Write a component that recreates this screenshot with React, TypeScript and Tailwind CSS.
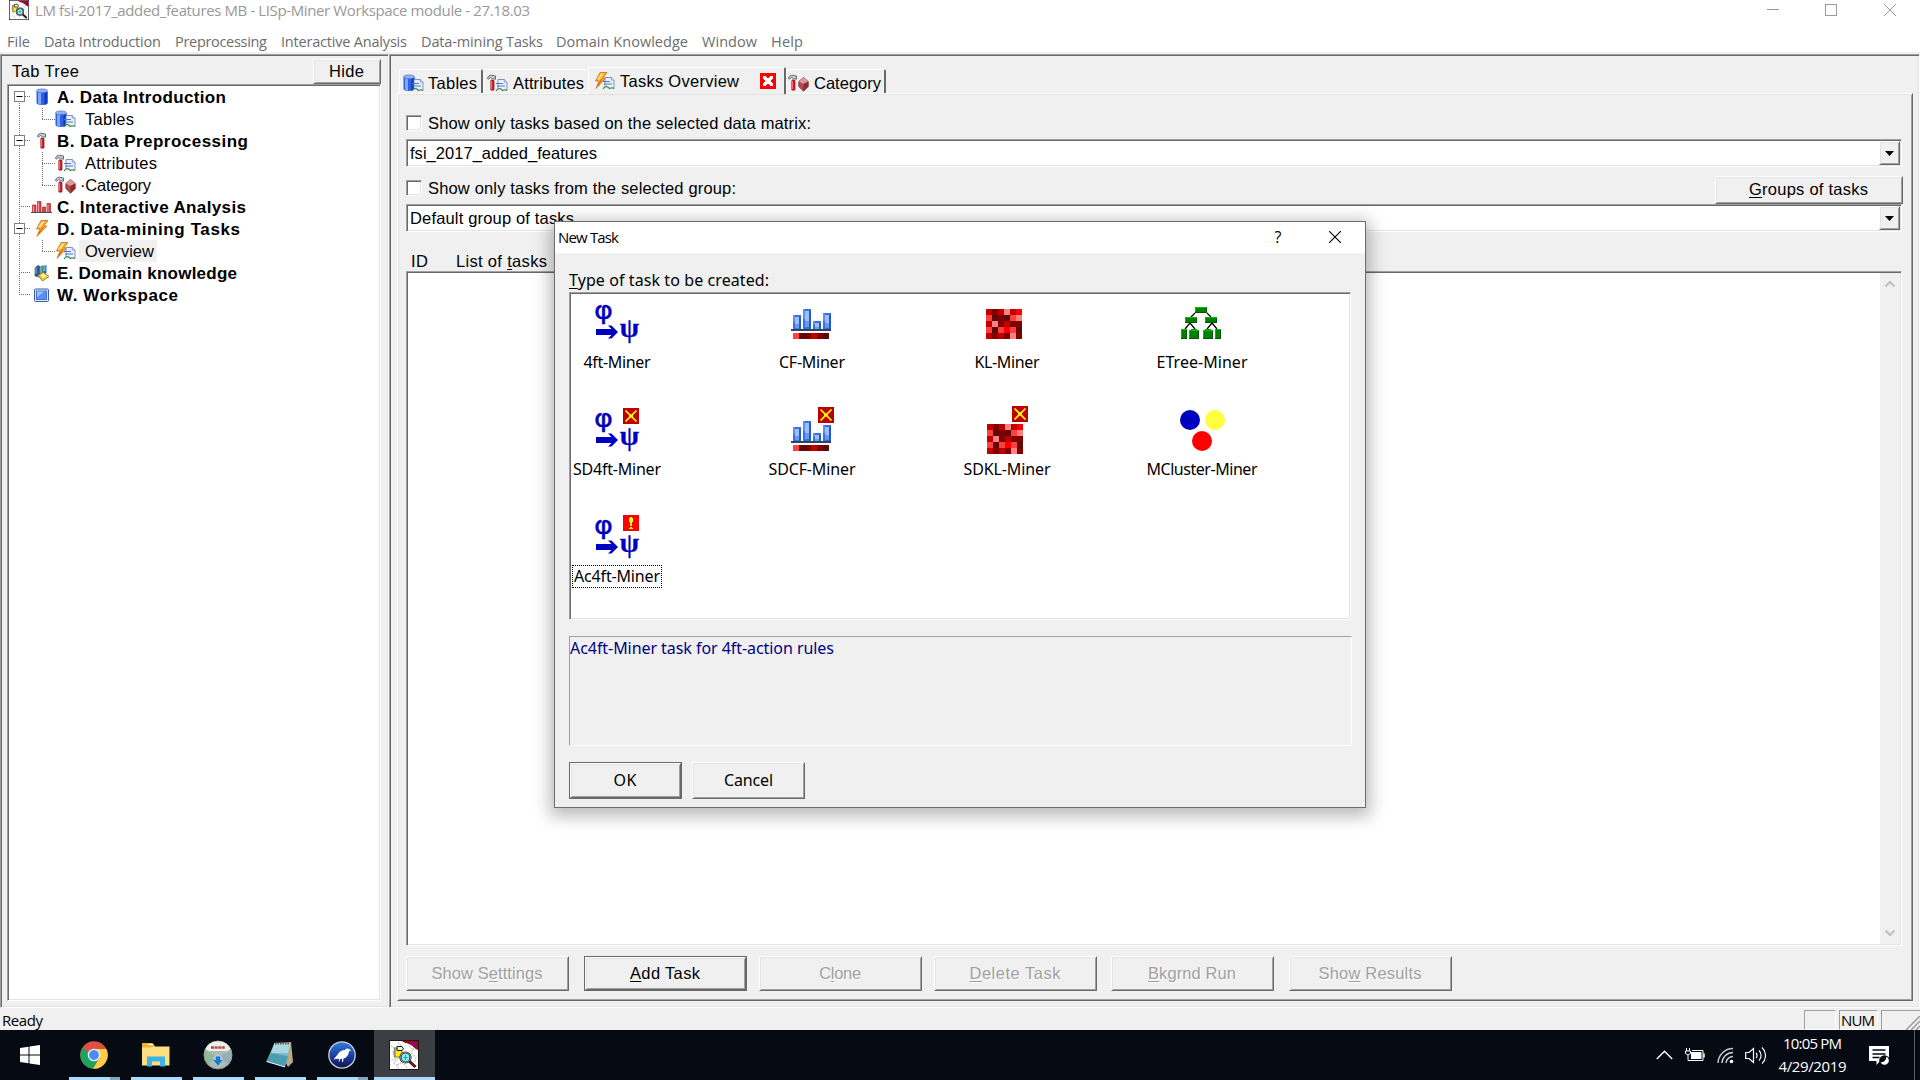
import { useLayoutEffect, useRef, type ReactNode } from "react";

const MS = "font-['Liberation_Sans',sans-serif]";
const UI = "font-['Open_Sans','Noto_Sans',sans-serif]";
const TAHOMA = "font-['Noto_Sans','DejaVu_Sans',sans-serif]";

const SUNKEN = "border border-t-[#a0a0a0] border-l-[#a0a0a0] border-r-white border-b-white shadow-[inset_1px_1px_0_#696969,inset_-1px_-1px_0_#e3e3e3]";
const RAISED = "border border-t-white border-l-white border-r-[#696969] border-b-[#696969] shadow-[inset_1px_1px_0_#e3e3e3,inset_-1px_-1px_0_#a0a0a0]";

/* Single line of text spread over a fixed width; "&" marks the mnemonic letter. */
function Text({ t, w, className = "" }: { t: string; w: number; className?: string }) {
  const ref = useRef<HTMLSpanElement>(null);
  useLayoutEffect(() => {
    const el = ref.current;
    if (!el) return;
    el.style.letterSpacing = "0px";
    const natural = el.getBoundingClientRect().width;
    const n = (el.textContent ?? "").length;
    el.style.letterSpacing = `${(w - natural) / Math.max(1, n - 1)}px`;
  }, [t, w]);
  const i = t.indexOf("&");
  return (
    <span className={`block shrink-0 whitespace-pre leading-5 ${className}`} style={{ width: w }}>
      <span ref={ref} className="inline-block whitespace-pre">
        {i < 0 ? t : (
          <>
            {t.slice(0, i)}
            <u className="underline decoration-1 underline-offset-2 [text-decoration-skip-ink:none]">{t[i + 1]}</u>
            {t.slice(i + 2)}
          </>
        )}
      </span>
    </span>
  );
}

/* ---------- small icons ---------- */

function Cylinder({ x = 0 }: { x?: number }) {
  return (
    <g transform={`translate(${x} 0)`}>
      <path d="M0.5 3v12c0 1 2.500 2 5.500 2s5.500-1 5.500-2V3z" fill="#2f5fe6" />
      <path d="M2 3.500h3v13c-2-.2-3-.6-3-1z" fill="#7fa8fb" />
      <path d="M8.500 4h3v11c0 .8-1.500 1.300-3 1.700z" fill="#1137c0" />
      <ellipse cx="6" cy="2.800" rx="5.500" ry="1.900" fill="#8fb2ff" stroke="#4e6fc9" strokeWidth=".7" />
    </g>
  );
}
function Hammer({ x = 0 }: { x?: number }) {
  return (
    <g transform={`translate(${x} 0)`}>
      <path d="M0.500 4.500C1 1.800 3 1 5 1.300L8.500 2v3.200L5.500 4.700 3.500 3.500 1.500 5z" fill="#c9cfd2" stroke="#555e62" strokeWidth=".9" />
      <path d="M4 4.500h2.600V7H4z" fill="#9aa" />
      <rect x="3.400" y="6" width="4" height="10.500" rx="1" fill="#b01822" />
      <rect x="4" y="7" width="1.200" height="8" fill="#ee7078" />
    </g>
  );
}
function Sheet() {
  return (
    <g>
      <path d="M11 5.500h6.500L20 8v8.500h-9z" fill="#e8f1fd" stroke="#6f86b5" strokeWidth=".9" />
      <path d="M9 9.500h7M10 12h8" stroke="#4a78c8" strokeWidth="1.100" />
      <path d="M9 17c2-3 4.500-3 6.500-.5 1.500-1 3-1 4.500 0" stroke="#3c8a45" strokeWidth="1.200" fill="#fff" />
      <path d="M17.300 5.500V8H20" fill="#fff" stroke="#6f86b5" strokeWidth=".8" />
    </g>
  );
}
function Bolt({ x = 0 }: { x?: number }) {
  return (
    <g transform={`translate(${x} 0)`}>
      <path d="M6 .5h7L8.800 6H12L2 16.500 5 9H1.500z" fill="#f9a91c" stroke="#c0762a" strokeWidth=".8" />
      <path d="M6.800 1.500h3L5.500 7.500H3z" fill="#ffe08a" />
      <path d="M8 7L3.500 14" stroke="#d2421a" strokeWidth=".8" />
    </g>
  );
}
function Gem() {
  return (
    <g>
      <path d="M15.500 3.500l4.700 4v5l-4.700 4.700-4.700-4.700v-5z" fill="#b04a50" stroke="#7d2c31" strokeWidth=".8" />
      <path d="M15.500 3.500l4.700 4-4.700 2.500-4.700-2.500z" fill="#dc9a9d" />
      <path d="M15.500 10l4.700-2.500v5l-4.700 4.700z" fill="#8d2b31" />
    </g>
  );
}

type Kind = "cyl" | "tables" | "hammer" | "attrs" | "category" | "chart" | "bolt" | "overview" | "books" | "screen";

function SmallIcon({ kind }: { kind: Kind }) {
  return (
    <svg width="21" height="18" viewBox="0 0 21 18" className="block shrink-0">
      {kind === "cyl" && <Cylinder x={5} />}
      {kind === "tables" && (<><Cylinder /><Sheet /></>)}
      {kind === "hammer" && <Hammer x={6} />}
      {kind === "attrs" && (<><Hammer /><Sheet /></>)}
      {kind === "category" && (<><Hammer /><Gem /></>)}
      {kind === "chart" && (
        <>
          <path d="M1.500 7h3.500v7H1.500zM6.500 3.500h3.500V14H6.500zM11.500 9h3v5h-3zM16 5.500h3.500V14H16z" fill="#d9434a" stroke="#b0262d" strokeWidth=".7" />
          <path d="M2.500 8v6M7.500 4.500V14M17 6.500V14" stroke="#f09a9d" />
          <path d="M0 14.500h21" stroke="#4c4f55" />
        </>
      )}
      {kind === "bolt" && <Bolt x={4} />}
      {kind === "overview" && (<><Bolt /><Sheet /></>)}
      {kind === "books" && (
        <>
          <path d="M4 4l3-2.500 2 1V13l-5-1z" fill="#2c5a9c" stroke="#1c355f" strokeWidth=".6" />
          <path d="M8.500 3l4-2v9l-4 3z" fill="#3d8f78" />
          <path d="M12.500 2l3-1v8l-3 3z" fill="#2e68b4" />
          <path d="M5 3.500v6M10 3v6M13.800 2v5" stroke="#bcd3ee" strokeWidth=".8" />
          <path d="M7 11.500l5-3.500 6 4.500-6.500 4.500z" fill="#e8c646" stroke="#8a6f16" strokeWidth=".8" />
          <path d="M9.500 11.500l3-2 3 2.500-3 2.200z" fill="#fbf0a8" />
        </>
      )}
      {kind === "screen" && (
        <>
          <rect x="3.500" y="3" width="14" height="12.500" rx="1" fill="#dfe8f7" stroke="#3d5fa8" />
          <rect x="5.500" y="5" width="10" height="8.500" fill="#5b8ff5" stroke="#2d5ed0" strokeWidth=".8" />
          <path d="M6 5.500h7l-7 6z" fill="#a4c4ff" />
        </>
      )}
    </svg>
  );
}

function AppIcon({ size }: { size: number }) {
  return (
    <svg width={size} height={size} viewBox="0 0 30 30" className="block shrink-0">
      <rect x=".5" y=".5" width="29" height="29" fill="#fff" stroke="#1a1a1a" />
      <path d="M2 6l5 3-3 5 5 4-4 5 5 5M9 2l3 4M15 24l4 5M25 8l-3 5 5 4-1 5M3 12h3M2 20l5-1M8 25l6-3M20 6l4 4" stroke="#c4c4c4" strokeWidth="1.200" fill="none" strokeDasharray="2 1" />
      <path d="M13 1h16v9c-3-1-5-4-8-5.500S15 3 13 1z" fill="#a5001c" />
      <path d="M22 2h2v1h3v2h2v2h-3V5h-3z" fill="#7a1080" />
      <rect x="6" y="8" width="7" height="9" fill="#ffee00" stroke="#6b6b00" strokeWidth=".8" />
      <path d="M5.500 7.500v10" stroke="#888" strokeWidth="1.500" />
      <path d="M8 6.500h5l1.500 2.500-1.500 1.500H8z" fill="#eee" stroke="#111" />
      <path d="M20 21l6.500 6" stroke="#111" strokeWidth="3" />
      <path d="M20.500 21.500l5.500 5" stroke="#b01414" strokeWidth="1.300" />
      <circle cx="16.500" cy="17.500" r="5" fill="#7df0f4" stroke="#222" strokeWidth="2.200" />
      <circle cx="16.500" cy="17.500" r="5" fill="none" stroke="#9a9a9a" />
      <path d="M14.500 17.500h4M16.500 15v5" stroke="#18a8c8" />
    </svg>
  );
}

/* ---------- tree ---------- */

type Row = { text: string; w: number; kind: Kind; level: 0 | 1; open?: boolean; last?: boolean; sel?: boolean; end?: boolean };
const rows: Row[] = [
  { text: "A. Data Introduction", w: 169, kind: "cyl", level: 0, open: true },
  { text: "Tables", w: 49, kind: "tables", level: 1, last: true },
  { text: "B. Data Preprocessing", w: 191, kind: "hammer", level: 0, open: true },
  { text: "Attributes", w: 72, kind: "attrs", level: 1 },
  { text: "·Category", w: 71, kind: "category", level: 1, last: true },
  { text: "C. Interactive Analysis", w: 189, kind: "chart", level: 0 },
  { text: "D. Data-mining Tasks", w: 183, kind: "bolt", level: 0, open: true },
  { text: "Overview", w: 69, kind: "overview", level: 1, last: true, sel: true },
  { text: "E. Domain knowledge", w: 180, kind: "books", level: 0 },
  { text: "W. Workspace", w: 121, kind: "screen", level: 0, end: true },
];

function Guide({ r, first }: { r: Row; first: boolean }) {
  const dots = { stroke: "#6e6e6e", strokeDasharray: "1 1", strokeWidth: 1 };
  const width = r.level === 0 ? 22 : 46;
  return (
    <svg width={width} height="22" viewBox={`0 0 ${width} 22`} className="block shrink-0">
      <path d={`M10.500 ${first ? 11 : 0}V${r.end ? 11 : 22}`} {...dots} />
      {r.level === 0 && <path d="M10 10.500h13" {...dots} />}
      {r.level === 1 && <path d={`M33.500 0V${r.last ? 11 : 22}M33 11.500h13`} {...dots} />}
      {r.open && (
        <>
          <rect x="5.500" y="5.500" width="10" height="10" fill="#fff" stroke="#808080" />
          <path d="M7.500 10.500h6" stroke="#000" />
        </>
      )}
    </svg>
  );
}

function Tree() {
  return (
    <div className={`${SUNKEN} flex-1 bg-white pl-px pt-px`}>
      {rows.map((r, i) => (
        <div key={r.text} className="flex h-[22px] items-center">
          <Guide r={r} first={i === 0} />
          <SmallIcon kind={r.kind} />
          {r.level === 0 ? (
            <Text t={r.text} w={r.w} className="ml-[5px] mt-[2px] text-[17px] font-bold" />
          ) : (
            <div className={`ml-[3px] flex h-[22px] items-center pr-[3px] ${r.text.startsWith("·") ? "pl-px" : "pl-[6px]"} ${r.sel ? "bg-[#f0f0f0]" : ""}`}>
              <Text t={r.text} w={r.w} className="text-[16.5px]" />
            </div>
          )}
        </div>
      ))}
    </div>
  );
}

/* ---------- main pane ---------- */

function Tab({ kind, text, w, className, gap = "ml-[5px]", active }: { kind: Kind; text: string; w: number; className: string; gap?: string; active?: boolean }) {
  return (
    <div
      className={`${className} ${active ? "z-10 -mb-px h-[27px]" : "h-6 pt-[3px]"} relative flex items-center overflow-hidden rounded-t-[2px] border-l border-r-2 border-t border-l-white border-t-white bg-[#f0f0f0]`}
    >
      <SmallIcon kind={kind} />
      <Text t={text} w={w} className={`${gap} text-[16.5px]`} />
      {active && (
        <svg width="16" height="16" viewBox="0 0 16 16" className="mb-px ml-[21px] block shrink-0">
          <rect width="16" height="16" fill="#f00" />
          <path d="M3 3h3v1h1v1h2V4h1V3h3v3h-1v1h-1v2h1v1h1v3h-3v-1H9v-1H7v1H6v1H3v-3h1V9h1V7H4V6H3z" fill="#fff" />
        </svg>
      )}
    </div>
  );
}

function Check({ text, w }: { text: string; w: number }) {
  return (
    <div className="flex items-center">
      <div className={`${SUNKEN} size-4 bg-white`} />
      <Text t={text} w={w} className="ml-[6px] text-[16.5px]" />
    </div>
  );
}

function Combo({ text, w }: { text: string; w: number }) {
  return (
    <div className={`${SUNKEN} flex h-[28px] w-[1496px] items-center bg-white pl-[3px] pr-px`}>
      <Text t={text} w={w} className="text-[16.5px]" />
      <div className={`${RAISED} ml-auto flex h-6 w-[21px] items-center justify-center bg-[#f0f0f0]`}>
        <svg width="9" height="5" viewBox="0 0 9 5"><path d="M0 0h9L4.500 5z" fill="#000" /></svg>
      </div>
    </div>
  );
}

function Button({ text, w, className, state = "normal", font = "mb-[2px] mr-px text-[16.5px]" }: { text: string; w: number; className: string; state?: "normal" | "default" | "disabled"; font?: string }) {
  const inner = <Text t={text} w={w} className={`${font} ${state === "disabled" ? "text-[#a0a0a0] [text-shadow:1px_1px_0_#fff]" : "text-black"}`} />;
  if (state === "default")
    return (
      <button className={`${className} flex border border-[#696969] bg-[#f0f0f0]`}>
        <span className={`${RAISED} flex h-full w-full items-center justify-center`}>{inner}</span>
      </button>
    );
  return <button className={`${className} ${RAISED} flex items-center justify-center bg-[#f0f0f0]`}>{inner}</button>;
}

function ListArea() {
  return (
    <div className={`${SUNKEN} flex h-[675px] w-[1496px] justify-end bg-white p-px`}>
      <div className="flex w-[20px] flex-col items-center justify-between bg-[#f0f0f0] py-[7px]">
        <svg width="10" height="8" viewBox="0 0 10 8"><path d="M.5 6.500L5 2l4.500 4.500" fill="none" stroke="#bfbfbf" strokeWidth="2" /></svg>
        <svg width="10" height="8" viewBox="0 0 10 8"><path d="M.5 1.500L5 6l4.500-4.500" fill="none" stroke="#bfbfbf" strokeWidth="2" /></svg>
      </div>
    </div>
  );
}

/* ---------- dialog ---------- */

function Arrow4ft({ badge }: { badge?: "x" | "!" }) {
  return (
    <svg width="46" height="44" viewBox="0 0 46 44" className="block overflow-visible">
      <g transform={badge ? "translate(0 4)" : undefined}>
        <text x="0" y="16" textLength="19" lengthAdjust="spacingAndGlyphs" fontFamily="DejaVu Sans" fontSize="25" fill="#0000c0" stroke="#0000c0" strokeWidth=".4">φ</text>
        <text x="35.500" y="34" textAnchor="middle" fontFamily="Liberation Serif" fontWeight="bold" fontSize="28" fill="#0000c0" stroke="#0000c0" strokeWidth=".3">ψ</text>
        <path d="M2 26h15.500l-3.500-3.500h3.500L24 29l-6.500 6.500H14l3.500-3.500H2z" fill="#0000c0" />
      </g>
      {badge === "x" && <g transform="translate(29 1)"><XBadge /></g>}
      {badge === "!" && (
        <g transform="translate(29 1)">
          <rect width="16" height="16" fill="#f00" />
          <path d="M7 2h2v1h1v4H9v4H7V7H6V3h1zM7 12h2v1h1v1H6v-1h1z" fill="#ff0" />
        </g>
      )}
    </svg>
  );
}
function XBadge() {
  return (
    <>
      <rect width="16" height="16" fill="#c00000" />
      <path d="M2.500 2.500l11 11M13.500 2.500l-11 11" stroke="#ff0" strokeWidth="1.700" />
      <rect x="6" y="6.500" width="4" height="3" fill="#ff0" />
    </>
  );
}
function Bars() {
  const bar = (x: number, y: number) => (
    <g key={x}>
      <rect x={x} y={y} width="8" height={20 - y} fill="#3a6fdf" />
      <rect x={x + 2} y={y + 2} width="4" height={(20 - y) * 0.7} fill="#9cc0ff" />
      <rect x={x + 2} y={y + 2 + (20 - y) * 0.5} width="4" height={(20 - y) * 0.3} fill="#6699f2" />
      <rect x={x} y={y} width="2" height={(20 - y) * 0.5} fill="#5f8fe8" />
      <rect x={x + 6} y={y + 2} width="2" height={18 - y} fill="#2757c4" />
    </g>
  );
  return (
    <>
      {bar(2, 6)}{bar(12, 0)}{bar(22, 12)}{bar(32, 4)}
      <rect y="20" width="40" height="2" fill="#2e4560" />
      {["#ff4040", "#600808", "#800000", "#c00000", "#800000", "#600808"].map((c, i) => (
        <rect key={i} x={2 + i * 6} y="24" width="6" height="6" fill={c} />
      ))}
    </>
  );
}
const palette: Record<string, string> = { r: "#c00000", d: "#800000", k: "#600808", p: "#ff8080", o: "#ff4040", f: "#ff0000" };
const grid = ["rdrprf", "okdkop", "rpdrdd", "okofok", "rdrdpd"];
function Matrix() {
  return (
    <>
      {grid.flatMap((line, y) => line.split("").map((c, x) => (
        <rect key={`${x}-${y}`} x={x * 6} y={y * 6} width="6" height="6" fill={palette[c]} />
      )))}
    </>
  );
}
function TreeIcon() {
  const box = (x: number, y: number, w: number, h: number) => (
    <g key={`${x}-${y}`}>
      <rect x={x} y={y} width={w} height={h} fill="#008000" />
      <path d={`M${x} ${y + 0.5}h${w}M${x + 0.5} ${y}v${h}`} stroke="#00c000" />
      <path d={`M${x} ${y + h - 0.5}h${w}M${x + w - 0.5} ${y + 1}v${h - 1}`} stroke="#005800" />
    </g>
  );
  return (
    <>
      <path d="M14 6l-4 4M26 6l4 4M9 16l-5 6M9 16l5 6M31 16l-5 6M31 16l5 6" stroke="#000" strokeWidth="1.200" />
      {box(14, 0, 12, 6)}{box(4, 10, 12, 6)}{box(24, 10, 12, 6)}
      {box(0, 22, 6, 10)}{box(8, 23, 10, 9)}{box(22, 23, 10, 9)}{box(34, 22, 6, 10)}
      <path d="M10 22.500h6M24 22.500h6" stroke="#00a000" />
    </>
  );
}

type Miner = { name: string; w: number; icon: ReactNode; pad: string; focus?: boolean };
const miners: Miner[] = [
  { name: "4ft-Miner", w: 67, pad: "pt-[10px]", icon: <Arrow4ft /> },
  { name: "CF-Miner", w: 66, pad: "pt-[10px]", icon: <svg width="44" height="44" viewBox="0 0 44 44"><g transform="translate(1 6)"><Bars /></g></svg> },
  { name: "KL-Miner", w: 65, pad: "pt-[10px]", icon: <svg width="44" height="44" viewBox="0 0 44 44"><g transform="translate(1 6)"><Matrix /></g></svg> },
  { name: "ETree-Miner", w: 91, pad: "pt-[10px]", icon: <svg width="44" height="44" viewBox="0 0 44 44"><g transform="translate(1 4)"><TreeIcon /></g></svg> },
  { name: "SD4ft-Miner", w: 88, pad: "pt-[7px]", icon: <Arrow4ft badge="x" /> },
  { name: "SDCF-Miner", w: 87, pad: "pt-[7px]", icon: <svg width="44" height="48" viewBox="0 0 44 48"><g transform="translate(1 14)"><Bars /></g><g transform="translate(28 0)"><XBadge /></g></svg> },
  { name: "SDKL-Miner", w: 87, pad: "pt-[6px]", icon: <svg width="44" height="48" viewBox="0 0 44 48"><g transform="translate(2 18)"><Matrix /></g><g transform="translate(27 0)"><XBadge /></g></svg> },
  { name: "MCluster-Miner", w: 111, pad: "pt-[6px]", icon: <svg width="46" height="48" viewBox="0 0 46 48"><circle cx="11" cy="14" r="10" fill="#0000c0" /><circle cx="36" cy="14" r="10" fill="#ffff40" /><circle cx="23" cy="35" r="10" fill="#f00" /></svg> },
  { name: "Ac4ft-Miner", w: 86, pad: "pt-[7px]", icon: <Arrow4ft badge="!" />, focus: true },
];

function Dialog() {
  return (
    <div className={`${TAHOMA} absolute left-[554px] top-[221px] flex h-[587px] w-[812px] flex-col border border-[#6b6d6b] bg-[#f0f0f0] text-[16px] text-black shadow-[0_4px_16px_4px_rgba(0,0,0,0.28)]`}>
      <div className={`${UI} flex h-[31px] shrink-0 items-center bg-white pb-[2px] pl-[3px] text-[15px]`}>
        <Text t="New Task" w={61} />
        <span className="ml-auto w-4 text-center text-[16px] leading-5">?</span>
        <svg width="12" height="12" viewBox="0 0 12 12" className="ml-[43px] mr-[24px]"><path d="M0 0l12 12M12 0L0 12" stroke="#000" strokeWidth="1.100" /></svg>
      </div>
      <div className="flex flex-col pl-[14px]">
        <Text t="&Type of task to be created:" w={200} className="mt-[17px] text-[16px]" />
        <div className={`${SUNKEN} mt-[2px] grid h-[328px] w-[782px] grid-cols-[repeat(4,195px)] content-start bg-white`}>
          {miners.map((m) => (
            <div key={m.name} className="flex h-[107px] w-[94px] flex-col items-center">
              <div className={`flex h-[58px] items-start ${m.pad}`}>{m.icon}</div>
              <div className={`flex h-[23px] shrink-0 items-center justify-center px-[2px] pb-[2px] ${m.focus ? "outline-1 -outline-offset-1 outline-dotted outline-black" : ""}`}>
                <Text t={m.name} w={m.w} className="text-[16px]" />
              </div>
            </div>
          ))}
        </div>
        <div className="mt-[16px] h-[110px] w-[783px] border border-b-white border-l-[#a0a0a0] border-r-white border-t-[#a0a0a0] pt-px">
          <Text t="Ac4ft-Miner task for 4ft-action rules" w={264} className="text-[16px] text-[#000080]" />
        </div>
        <div className="mt-[16px] flex gap-[10px]">
          <Button text="OK" w={23} className="h-[37px] w-[113px]" state="default" font="mb-[2px] mr-px text-[16px]" />
          <Button text="Cancel" w={49} className="h-[37px] w-[113px]" font="mb-[2px] text-[16px]" />
        </div>
      </div>
    </div>
  );
}

/* ---------- taskbar ---------- */

function TaskItem({ children, width, under, split, active }: { children: ReactNode; width: string; under?: boolean; split?: boolean; active?: boolean }) {
  return (
    <div className={`${width} flex h-[50px] shrink-0 flex-col ${active ? "bg-[#3b3f44]" : ""}`}>
      <div className="flex h-[47px] items-center justify-center pr-[2px] pt-[3px]">{children}</div>
      {under && (
        <div className="flex h-[3px]">
          <div className="flex-1 bg-[#a9dcfa]" />
          {split && <div className="w-[10px] bg-[#84a5bb]" />}
        </div>
      )}
    </div>
  );
}

function Taskbar() {
  return (
    <div className="flex h-[50px] shrink-0 bg-[#060a12]">
      <TaskItem width="w-[62px]">
        <svg width="20" height="20" viewBox="0 0 20 20"><path d="M0 3l8.500-1.200V9.500H0zM9.500 1.600L20 0v9.500H9.500zM0 10.500h8.500v7.700L0 17zM9.500 10.500H20V20L9.500 18.400z" fill="#fff" /></svg>
      </TaskItem>
      <div className="ml-[7px] flex gap-[11px]">
        <TaskItem width="w-[51px]" under split>
          <svg width="28" height="28" viewBox="0 0 28 28">
            <circle cx="14" cy="14" r="13.700" fill="#dd5144" />
            <path d="M2.200 7A13.700 13.700 0 0 0 13 27.700L19 17H9z" fill="#1ca261" />
            <path d="M14 8h12.300A13.700 13.700 0 0 1 13 27.700L19.500 17z" fill="#ffcd46" />
            <path d="M2.200 7L8.600 17.500 14 14z" fill="#1ca261" />
            <circle cx="14" cy="14" r="6.300" fill="#f1f1f1" />
            <circle cx="14" cy="14" r="4.900" fill="#4c8bf5" />
          </svg>
        </TaskItem>
        <TaskItem width="w-[51px]" under>
          <svg width="28" height="24" viewBox="0 0 28 24">
            <path d="M0 1h11l2 2.500H27.500V22.500H0z" fill="#fddf83" />
            <path d="M0 0h10.500l2.500 3.500H10L9 4.500H0z" fill="#e9b531" />
            <path d="M5 23.500V13.500h18v10h-5v-5h-8v5z" fill="#3fb3e8" />
            <path d="M6 1.500h5" stroke="#fff" />
          </svg>
        </TaskItem>
        <TaskItem width="w-[51px]" under>
          <svg width="30" height="30" viewBox="0 0 30 30">
            <circle cx="15" cy="15" r="14" fill="#a9bdb6" stroke="#8a9694" />
            <path d="M2.500 9A14 14 0 0 1 27.500 9L24 11H6z" fill="#efefec" />
            <path d="M2 11l13 6L5 24A14 14 0 0 1 2 11z" fill="#8fb998" />
            <path d="M28 11l-13 6 11 7a14 14 0 0 0 2-13z" fill="#93aeb8" />
            <path d="M8 7.500h14" stroke="#b04b46" strokeWidth="2.500" strokeDasharray="3 .6" />
            <circle cx="15" cy="19" r="4.500" fill="#b4cad4" />
            <path d="M12.800 16.500h4.400v3.500h2.500L15 25.500 10.300 20h2.500z" fill="#1778d0" />
          </svg>
        </TaskItem>
        <TaskItem width="w-[51px]" under>
          <svg width="28" height="28" viewBox="0 0 28 28">
            <path d="M9 2l16-1 2 20-5 5z" fill="#b9a98a" />
            <path d="M8.500 2h16L19 26 .500 20.500z" fill="#7fbfcb" />
            <path d="M8.500 2h16l-2.500 10-17 0z" fill="#a9d8e0" />
            <path d="M5 12l17 3-3 11L.500 20.500z" fill="#4c9fb3" />
            <path d="M9 2.500h15" stroke="#555" strokeWidth="2" strokeDasharray="1.500 1" />
            <path d="M.5 20.500L19 26" stroke="#e8f4f6" />
          </svg>
        </TaskItem>
        <TaskItem width="w-[51px]" under split>
          <svg width="28" height="28" viewBox="0 0 28 28">
            <defs><linearGradient id="sky" x2="0" y2="1"><stop offset="0" stopColor="#2f7de0" /><stop offset=".55" stopColor="#1b3f9c" /><stop offset="1" stopColor="#161149" /></linearGradient></defs>
            <circle cx="14" cy="14" r="13.200" fill="url(#sky)" stroke="#c9d2de" strokeWidth="1.300" />
            <path d="M5.500 18.500L10 13c1.500-2.500 4-4 7-4 .8-1.500 3-2 4.500-.8l1.500 1.600-2 .4c-.2 4-2.500 6.500-5.500 7.300l-.5 3.500-1-.2v-3l-2 .2-.5 2.500-.8-.3.300-2.500c-1.500-.2-3.500.3-5.500.8z" fill="#fff" />
          </svg>
        </TaskItem>
      </div>
      <div className="ml-[6px]">
        <TaskItem width="w-[61px]" under active><AppIcon size={30} /></TaskItem>
      </div>
      <div className="ml-auto flex items-center">
        <svg width="17" height="10" viewBox="0 0 17 10"><path d="M.8 9L8.500 1.200 16.200 9" fill="none" stroke="#fff" strokeWidth="1.400" /></svg>
        <svg width="20" height="14" viewBox="0 0 20 14" className="ml-[12px]">
          <path d="M1.500 0v3M4.500 0v3" stroke="#fff" />
          <path d="M.5 3h5v2.500L3 7 .5 5.500z" fill="none" stroke="#fff" />
          <path d="M3 7v5.500h2M7 2.500h11v10H4.500" fill="none" stroke="#fff" />
          <rect x="6" y="4" width="10.500" height="7" fill="#fff" /><path d="M19 5.500v4" stroke="#fff" strokeWidth="1.500" />
        </svg>
        <svg width="17" height="17" viewBox="0 0 17 17" className="ml-[12px]">
          <path d="M1 16A15 15 0 0 1 16 1.500M5 16A11 11 0 0 1 16 5.500M9 16a7 7 0 0 1 7-6.500" fill="none" stroke="#c9ccd0" strokeWidth="1.400" />
          <circle cx="14.500" cy="14.500" r="1.800" fill="#fff" />
        </svg>
        <svg width="21" height="19" viewBox="0 0 21 19" className="ml-[11px]">
          <path d="M.7 6.500H4L8.500 2.500v14L4 12.500H.7z" fill="none" stroke="#fff" strokeWidth="1.200" />
          <path d="M11 7a3.500 3.500 0 0 1 0 5M14 4.500a7 7 0 0 1 0 10M17 1.500a11 11 0 0 1 0 16" fill="none" stroke="#fff" strokeWidth="1.200" />
        </svg>
        <div className={`${UI} ml-[12px] flex w-[69px] flex-col items-center gap-[3px] pb-[2px] text-[15px] text-white`}>
          <Text t="10:05 PM" w={59} />
          <Text t="4/29/2019" w={68} />
        </div>
        <svg width="21" height="21" viewBox="0 0 21 21" className="ml-[22px]">
          <path d="M0 1h20v15h-9l-3.500 4v-4H0z" fill="#fff" />
          <path d="M3.500 5h13M3.500 9h13M3.500 12.500h7" stroke="#060a12" strokeWidth="1.300" />
          <circle cx="15.500" cy="15.500" r="5.300" fill="#060a12" />
          <path d="M17 11.500a4.300 4.300 0 1 1-5.500 5.500 4.500 4.500 0 0 0 5.500-5.500z" fill="#fff" />
        </svg>
        <div className="ml-[24px] mr-[5px] h-[50px] w-px bg-[#5a5d63]" />
      </div>
    </div>
  );
}

const menu: [string, number, string][] = [
  ["File", 23, "ml-[7px]"],
  ["Data Introduction", 117, "ml-[14px]"],
  ["Preprocessing", 92, "ml-[14px]"],
  ["Interactive Analysis", 126, "ml-[14px]"],
  ["Data-mining Tasks", 122, "ml-[14px]"],
  ["Domain Knowledge", 132, "ml-[13px]"],
  ["Window", 55, "ml-[14px]"],
  ["Help", 32, "ml-[14px]"],
];

export default function App() {
  return (
    <div className={`${MS} relative flex h-[1080px] w-[1920px] flex-col overflow-hidden bg-[#f0f0f0] text-black`}>
      <div className={`${UI} flex h-[22px] shrink-0 items-center bg-white pb-[2px] pl-[9px] text-[15px] text-[#999]`}>
        <AppIcon size={20} />
        <Text t="LM fsi-2017_added_features MB - LISp-Miner Workspace module - 27.18.03" w={495} className="ml-[6px]" />
        <div className="ml-auto mr-[24px] flex items-center gap-[47px]">
          <svg width="12" height="12" viewBox="0 0 12 12" className="-mr-px"><path d="M0 5.500h12" stroke="#999" /></svg>
          <svg width="12" height="12" viewBox="0 0 12 12"><rect x=".5" y=".5" width="11" height="11" fill="none" stroke="#999" /></svg>
          <svg width="12" height="12" viewBox="0 0 12 12"><path d="M0 0l12 12M12 0L0 12" stroke="#999" /></svg>
        </div>
      </div>
      <div className={`${UI} flex h-[30px] shrink-0 items-center bg-white pt-[9px] text-[14.5px] text-[#6d6d6d]`}>
        {menu.map(([t, w, m]) => (
          <Text key={t} t={t} w={w} className={m} />
        ))}
      </div>

      <div className="flex h-[956px] shrink-0 pt-[2px]">
        <div className={`${SUNKEN} flex w-[389px] flex-col pb-[6px] pl-[6px] pr-[7px] pt-[4px]`}>
          <div className="flex h-[25px] items-center justify-between pl-[5px]">
            <Text t="Tab Tree" w={67} className="mb-[2px] text-[16.5px]" />
            <Button text="Hide" w={35} className="h-[25px] w-[68px]" />
          </div>
          <Tree />
        </div>
        <div className={`${SUNKEN} flex flex-1 flex-col pl-[7px] pt-[12px]`}>
          <div className="flex h-[26px] items-end pl-[2px]">
            <Tab kind="tables" text="Tables" w={49} gap="ml-[4px]" className="mr-px w-[84px] border-r-[#696969] pl-[3px]" />
            <Tab kind="attrs" text="Attributes" w={71} className="w-[104px] border-r-[#f0f0f0] pl-[2px]" />
            <Tab kind="overview" text="Tasks Overview" w={119} className="w-[198px] border-r-[#696969] pl-[5px]" active />
            <Tab kind="category" text="Category" w={67} className="w-[100px] border-r-[#696969] pl-px" />
          </div>
          <div className={`${RAISED} flex h-[908px] w-[1516px] flex-col pl-[8px] pt-[19px]`}>
            <Check text="Show only tasks based on the selected data matrix:" w={383} />
            <div className="mt-[6px]"><Combo text="fsi_2017_added_features" w={187} /></div>
            <div className="flex h-[37px] w-[1497px] items-end justify-between">
              <div className="pb-[6px]"><Check text="Show only tasks from the selected group:" w={308} /></div>
              <Button text="&Groups of tasks" w={119} className="h-[28px] w-[188px]" />
            </div>
            <Combo text="Default group of tasks" w={164} />
            <div className="flex h-[39px] items-end pl-[5px]">
              <Text t="ID" w={17} className="text-[16.5px]" />
              <Text t="List of &tasks" w={91} className="ml-[28px] text-[16.5px]" />
            </div>
            <ListArea />
            <div className="mt-[10px] flex">
              <Button text="Show S&etttings" w={111} className="h-[35px] w-[163px]" state="disabled" />
              <Button text="&Add Task" w={70} className="ml-[15px] h-[35px] w-[163px]" state="default" />
              <Button text="C&lone" w={42} className="ml-[12px] h-[35px] w-[163px]" state="disabled" />
              <Button text="&Delete Task" w={91} className="ml-[12px] h-[35px] w-[163px]" state="disabled" />
              <Button text="&Bkgrnd Run" w={88} className="ml-[14px] h-[35px] w-[163px]" state="disabled" />
              <Button text="Sho&w Results" w={103} className="ml-[15px] h-[35px] w-[163px]" state="disabled" />
            </div>
          </div>
        </div>
      </div>

      <div className={`${UI} flex h-[22px] shrink-0 items-center pl-[2px] text-[15px]`}>
        <Text t="Ready" w={41} className="pt-[2px]" />
        <div className="ml-auto flex h-full items-end gap-[3px]">
          <div className="h-5 w-[32px] border border-b-white border-l-[#a0a0a0] border-r-white border-t-[#a0a0a0]" />
          <div className="flex h-5 w-[39px] items-center border border-b-white border-l-[#a0a0a0] border-r-white border-t-[#a0a0a0] pl-px">
            <Text t="NUM" w={34} />
          </div>
          <div className="flex h-5 w-[39px] items-end justify-end border-l border-t border-[#a0a0a0]">
            <svg width="14" height="14" viewBox="0 0 14 14"><path d="M0 14L14 0M5 14l9-9M10 14l4-4" stroke="#9a9a9a" strokeWidth="1.500" /></svg>
          </div>
        </div>
      </div>

      <Taskbar />
      <Dialog />
    </div>
  );
}
